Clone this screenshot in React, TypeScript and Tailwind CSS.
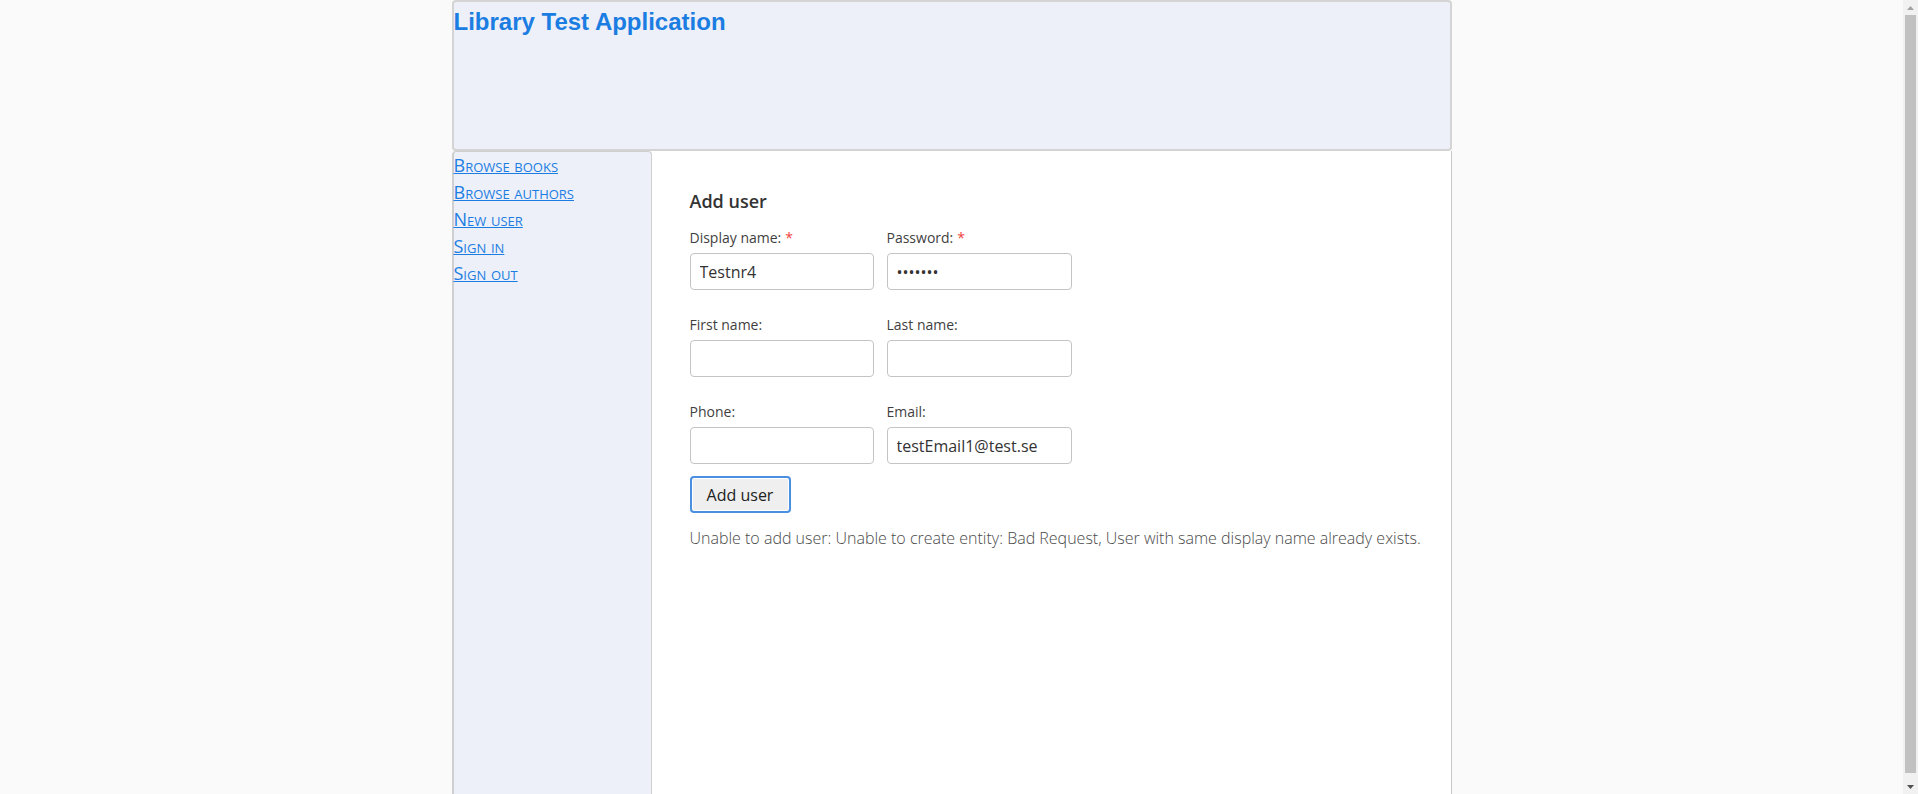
import React from 'react';

const links = ['Browse books', 'Browse authors', 'New user', 'Sign in', 'Sign out'];

const Field = ({ label, required, type = 'text', value = '' }: { label: string; required?: boolean; type?: string; value?: string }) => (
    <div className="flex flex-col">
        <label className="text-[14px] leading-[21px] text-[#3f3f3f] mb-[5px]">
            {label}
            {required && <span className="text-[#f0443a] ml-[4px]">*</span>}
        </label>
        <input
            type={type}
            defaultValue={value}
            readOnly
            className="h-[37px] w-full border border-[#c4c4c4] rounded-[4px] px-[9px] text-[16px] text-[#333] bg-white focus:outline-none"
        />
    </div>
)

const Scrollbar = () => (
    <div className="w-[15px] h-full bg-[#f1f1f1] flex flex-col">
        <div className="h-[15px] flex items-center justify-center">
            <svg width="7" height="4" viewBox="0 0 7 4"><path d="M3.5 0 L7 4 L0 4 Z" fill="#a3a3a3" /></svg>
        </div>
        <div className="h-[758px] mx-[2px] bg-[#c1c1c1]" />
        <div className="flex-1" />
        <div className="h-[15px] flex items-center justify-center">
            <svg width="7" height="4" viewBox="0 0 7 4"><path d="M0 0 L7 0 L3.5 4 Z" fill="#505050" /></svg>
        </div>
    </div>
)

const App = () => {
    return (
        <div className="flex h-[794px] w-full overflow-hidden bg-[#fafafa] font-['Open_Sans',sans-serif]">
            <div className="flex-1 min-w-0 flex justify-center">
                <div className="w-[1000px] flex flex-col">
                    {/* HEADER */}
                    <header className="h-[151px] shrink-0 border-2 border-[#d4d4d4] rounded-[4px] bg-[#edf0f8] pt-[6px]">
                        <h1 className="font-['Liberation_Sans',Arial,sans-serif] font-bold text-[24px] leading-[27px] text-[#1b7de2]">
                            Library Test Application
                        </h1>
                    </header>

                    <div className="flex flex-1 min-h-0">
                        {/* SIDEBAR */}
                        <nav className="w-[200px] shrink-0 bg-[#edf0f8] border-l-2 border-t border-r border-[#cfcfcf] rounded-t-[4px] flex flex-col">
                            {links.map((l) => (
                                <a key={l} href="#" className="text-[18px] leading-[22px] mb-[5px] first:mt-[2px] font-medium text-[#1b7de2] underline [font-variant:small-caps] self-start">
                                    {l}
                                </a>
                            ))}
                        </nav>

                        {/* CONTENT */}
                        <main className="flex-1 bg-white border-r border-[#c8c8c8] pl-[38px] pt-[37px]">
                            <h2 className="text-[18px] leading-[27px] font-semibold text-[#333] mb-[12px]">Add user</h2>
                            <div className="grid grid-cols-[184px_185px] gap-x-[13px] gap-y-[24px]">
                                <Field label="Display name:" required value="Testnr4" />
                                <Field label="Password:" required type="password" value="1234567" />
                                <Field label="First name:" />
                                <Field label="Last name:" />
                                <Field label="Phone:" />
                                <Field label="Email:" value="testEmail1@test.se" />
                            </div>
                            <button className="mt-[12px] w-[101px] h-[37px] border-2 border-[#4a8fe0] rounded-[4px] bg-[#efefef] shadow-[inset_0_0_0_1px_#ffffff] text-[16px] text-[#222]">
                                Add user
                            </button>
                            <p className="mt-[13px] text-[16px] leading-6 font-light text-[#4a4a4a]">
                                Unable to add user: Unable to create entity: Bad Request, User with same display name already exists.
                            </p>
                        </main>
                    </div>
                </div>
            </div>
            <Scrollbar />
        </div>
    )
}

export default App
